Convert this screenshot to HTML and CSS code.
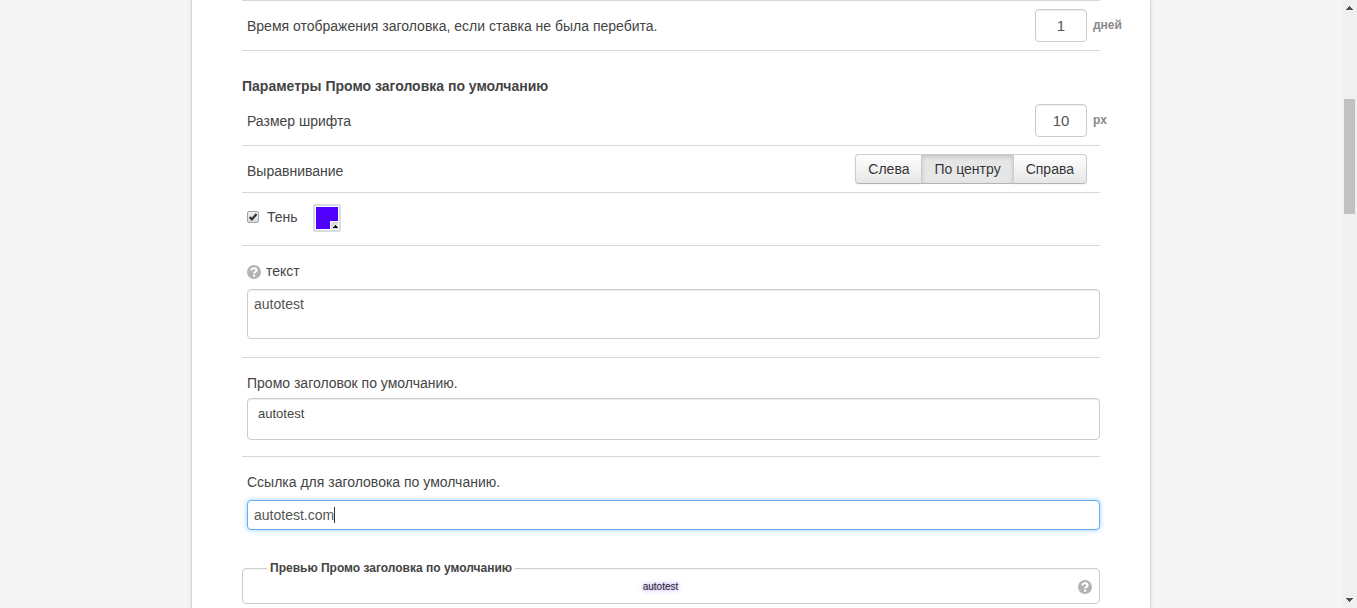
FILE: index.html
```
<!DOCTYPE html>
<html lang="ru">
<head>
<meta charset="utf-8">
<title>Параметры Промо заголовка</title>
<link rel="stylesheet" href="styles.css">
</head>
<body>
<div class="page">
<main class="card">
<form class="settings">
  <div class="row row-number row-first">
    <label for="days">Время отображения заголовка, если ставка не была перебита.</label>
    <div class="number"><input id="days" class="field" type="text" value="1"><span class="unit">дней</span></div>
  </div>
  <h2 class="heading">Параметры Промо заголовка по умолчанию</h2>
  <div class="row row-number">
    <label for="size">Размер шрифта</label>
    <div class="number"><input id="size" class="field" type="text" value="10"><span class="unit">px</span></div>
  </div>
  <div class="row row-align">
    <span id="align-label">Выравнивание</span>
    <div class="btn-group" role="group" aria-labelledby="align-label">
      <button class="btn" type="button">Слева</button>
      <button class="btn btn-active" type="button" aria-pressed="true">По центру</button>
      <button class="btn" type="button">Справа</button>
    </div>
  </div>
  <div class="row row-shadow">
    <label class="check"><input class="checkbox" type="checkbox" checked>Тень</label>
    <button class="swatch" type="button" aria-label="Цвет тени">
      <svg width="22" height="22" viewBox="0 0 22 22" shape-rendering="crispEdges"><path fill="#5000ff" d="M0 0h22v22H0z"/><path fill="#fff" d="M14 14h8v8h-8z"/><path fill="#d9dce3" d="M15 15h7v7h-7z"/><path fill="#111" d="M19 18h1v1h1v1h1v1h-5v-1h1v-1h1z"/></svg>
    </button>
  </div>
  <div class="row row-stack row-text">
    <label for="text"><svg class="help" viewBox="0 0 14 14"><circle cx="7" cy="7" r="7"/><path d="M4.4 5.4C4.4 3.8 5.5 3.2 7 3.2s2.6.8 2.6 2c0 1.7-2.5 1.6-2.5 3.4"/><path d="M6 10.7h2.2"/></svg>текст</label>
    <textarea id="text" class="field field-text">autotest</textarea>
  </div>
  <div class="row row-stack row-title">
    <label for="title">Промо заголовок по умолчанию.</label>
    <textarea id="title" class="field field-title">autotest</textarea>
  </div>
  <div class="row-stack row-link">
    <label for="link">Ссылка для заголовока по умолчанию.</label>
    <div class="link"><input id="link" class="field field-link" type="text" value="autotest.com"><span class="caret"></span></div>
  </div>
  <fieldset class="preview">
    <legend>Превью Промо заголовка по умолчанию</legend>
    <div class="preview-body">
      <span class="preview-text">autotest</span>
      <svg class="help" viewBox="0 0 14 14"><circle cx="7" cy="7" r="7"/><path d="M4.4 5.4C4.4 3.8 5.5 3.2 7 3.2s2.6.8 2.6 2c0 1.7-2.5 1.6-2.5 3.4"/><path d="M6 10.7h2.2"/></svg>
    </div>
  </fieldset>
</form>
</main>
</div>
<div class="scrollbar" aria-hidden="true">
  <svg width="7" height="4" viewBox="0 0 7 4" shape-rendering="crispEdges"><path d="M3 0h1v1h1v1h1v1h1v1H0V3h1V2h1V1h1z"/></svg>
  <div class="track"><div class="thumb"></div></div>
  <svg width="7" height="4" viewBox="0 0 7 4" shape-rendering="crispEdges"><path d="M0 0h7v1H6v1H5v1H4v1H3V3H2V2H1V1H0z"/></svg>
</div>
</body>
</html>
```
FILE: styles.css
```
* { box-sizing: border-box; }
body {
  margin: 0;
  height: 100vh;
  display: flex;
  overflow: hidden;
  background: #f5f5f5;
  color: #444;
  font: 14px/20px "Liberation Sans", Arial, sans-serif;
}
input, textarea, button { font: inherit; color: inherit; margin: 0; }
.page { flex: 1; min-width: 0; overflow: hidden; }
.card {
  max-width: 960px;
  min-height: 100%;
  margin: 0 auto;
  padding: 0 50px;
  background: #fff;
  border: solid #d8d8d8;
  border-width: 0 1px;
  box-shadow: 0 0 3px rgba(0, 0, 0, .12);
}
.row {
  display: flex;
  justify-content: space-between;
  padding: 8px 0 8px 5px;
  border-bottom: 1px solid #d8d8d8;
}
.row-first { border-top: 1px solid #d8d8d8; }
.row-number { align-items: center; }
.number { display: flex; gap: 6px; margin-right: -35px; }
.field {
  display: block;
  width: 100%;
  padding: 4px 6px;
  border: 1px solid #ccc;
  border-radius: 4px;
  background: #fff;
  color: #555;
  box-shadow: inset 0 1px 1px rgba(0, 0, 0, .075);
  outline: none;
  resize: none;
}
.number .field { width: 52px; height: 33px; text-align: center; font-size: 15px; }
.unit { width: 42px; padding-top: 6px; font-size: 12px; font-weight: bold; color: #888; }
.heading { margin: 25px 0 0; font-size: 14px; line-height: 20px; }
.row-align { align-items: center; padding-right: 13px; }
.row-align > span { padding-top: 4px; }
.btn-group { display: flex; }
.btn {
  height: 30px;
  padding: 0 12px;
  margin-left: -1px;
  border: 1px solid #ccc;
  border-bottom-color: #b3b3b3;
  background: linear-gradient(#fff, #e6e6e6);
  color: #333;
  box-shadow: 0 1px 2px rgba(0, 0, 0, .05);
  text-shadow: 0 1px 1px rgba(255, 255, 255, .75);
}
.btn:first-child { border-radius: 4px 0 0 4px; }
.btn:last-child { border-radius: 0 4px 4px 0; }
.btn-active { background: #e6e6e6; box-shadow: inset 0 2px 4px rgba(0, 0, 0, .15); z-index: 1; }
.row-shadow { justify-content: flex-start; gap: 15px; padding: 11px 0 13px 5px; }
.check { display: flex; align-items: center; gap: 8px; height: 26px; }
.checkbox {
  appearance: none;
  width: 12px;
  height: 12px;
  border: 1px solid #a3a3a3;
  border-radius: 2px;
  background: url("data:image/svg+xml,%3Csvg xmlns='http://www.w3.org/2000/svg' viewBox='0 0 10 10'%3E%3Cpath d='M1.7 5l2.2 2.4L8.5 2' fill='none' stroke='%23333' stroke-width='2.2'/%3E%3C/svg%3E"), linear-gradient(#eee, #ddd);
}
.swatch {
  width: 28px;
  height: 28px;
  padding: 1px;
  border: 2px solid #d9dce3;
  border-radius: 2px;
  background: #fff;
}
.swatch svg { display: block; }
.row-stack { display: flex; flex-direction: column; justify-content: flex-start; padding: 15px 0 16px 5px; }
.row-stack label { display: flex; align-items: flex-end; gap: 5px; }
.help { width: 14px; height: 14px; fill: #b3b3b3; }
.row-stack .help { margin-bottom: 2px; }
.help path { fill: none; stroke: #fff; stroke-width: 2; }
.row-text { padding-bottom: 18px; }
.field-text { height: 50px; margin-top: 8px; }
.field-title { height: 42px; margin-top: 5px; padding: 5px 10px; font-size: 13px; color: #444; }
.row-link { padding-bottom: 28px; }
.link { position: relative; margin-top: 8px; }
.field-link { height: 30px; border-color: #66aff5; box-shadow: 0 0 5px rgba(82, 168, 255, .6); }
.caret { position: absolute; left: 87px; top: 7px; width: 1px; height: 16px; background: #333; }
.preview { margin: 0; padding: 0; border: 1px solid #ccc; border-radius: 4px; box-shadow: inset 0 1px 1px rgba(0, 0, 0, .04); }
.preview legend { margin-left: 24px; padding: 0 3px; font-size: 12px; font-weight: bold; }
.preview-body { display: flex; align-items: center; padding: 0 7px 7px 0; }
.preview-text { flex: 1; text-align: center; font-size: 10px; line-height: 18px; color: #222; text-shadow: 0 0 5px rgba(80, 0, 255, .6); }
.scrollbar {
  width: 15px;
  display: flex;
  flex-direction: column;
  align-items: center;
  padding: 6px 2px;
  background: #f0f0f0;
}
.scrollbar svg { fill: #505050; }
.track { flex: 1; width: 100%; padding-top: 89px; }
.thumb { height: 115px; background: #c1c1c1; }
```
